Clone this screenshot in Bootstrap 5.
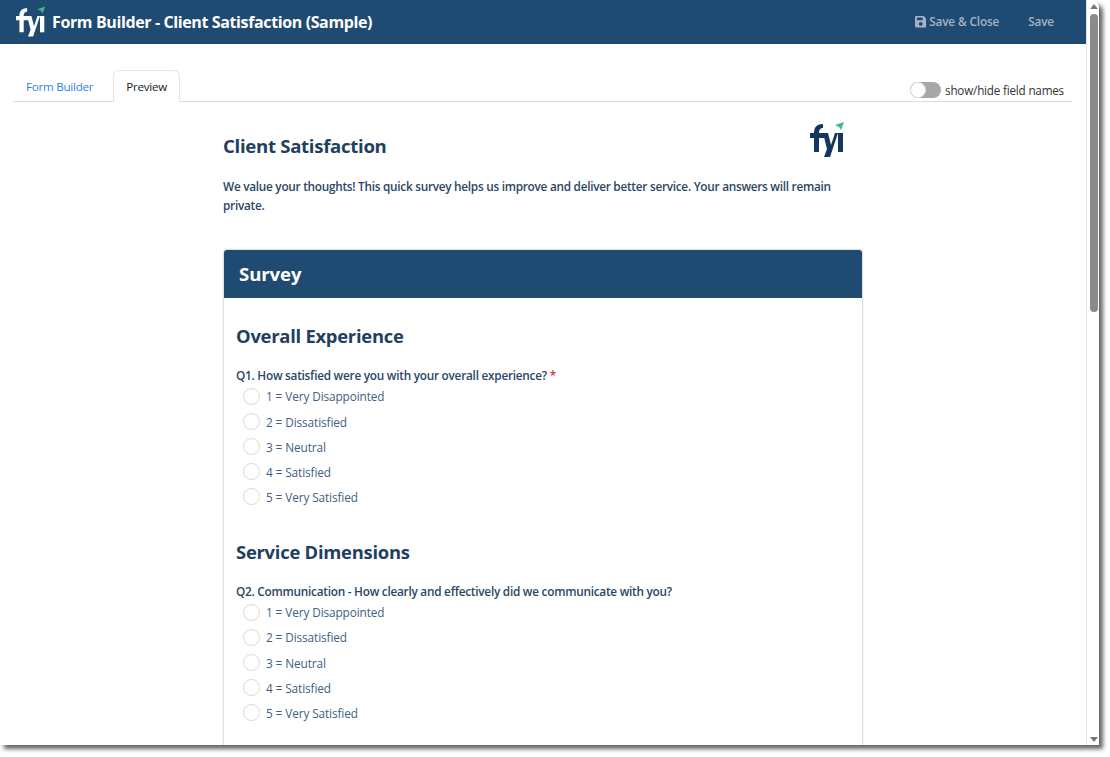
<!DOCTYPE html>
<html lang="en">
<head>
<meta charset="utf-8">
<title>Form Builder</title>
<link href="https://cdn.jsdelivr.net/npm/bootstrap@5.3.0/dist/css/bootstrap.min.css" rel="stylesheet">
<style>
html,body{height:100%;overflow:hidden;background:#fff}
body{font-family:"Open Sans","Noto Sans",sans-serif;color:#1f3f5f;font-size:13px}
.app-window{width:1099px;height:745px;box-shadow:4px 4px 4px #666;border-top-right-radius:8px;overflow:hidden;background:#fff}
.app-main{width:1086px;min-width:1086px;overflow:hidden}
.top-bar{height:44px;background:#1f4a72;color:#fff;padding:0 32px 0 16px}
.bar-title{font-size:16px;font-weight:700;margin:2px 0 0 6px;letter-spacing:-.38px}
.bar-action{font-size:11.8px;font-weight:600;color:#a5b4c4;background:none;border:0;padding:0;letter-spacing:-.15px}
.bar-gap{gap:29px}
.action-inner{gap:3px}
.tab-strip{margin:26px 14px 0 13px;height:32px;border-bottom-color:#dcdcdc}
.tab-strip .nav-link{font-size:11.6px;letter-spacing:-.25px;padding:0 12px;height:32px;line-height:31px;color:#2f80f0}
.tab-strip .nav-link.active{color:#222;border-color:#e6e6e6 #e6e6e6 #fff;padding:0 12px}
.tab-strip .nav-item+.nav-item{margin-left:7px}
.names-switch{margin-top:11px;margin-right:8px;font-size:11.7px;letter-spacing:-.2px;color:#333}
.toggle-track{width:31px;height:16px;border-radius:8px;background:#a8a8a8;position:relative;margin:0 4px 3px 0}
.toggle-knob{position:absolute;left:0;top:0;width:16px;height:16px;border-radius:50%;background:#fff;border:1px solid #e2e2e2}
.survey-wrap{width:640px;margin-left:223px}
.intro-head{height:68px;padding-top:20px;width:622px}
.intro-title{font-size:18.6px;font-weight:700;color:#1f3f5f;margin:0;padding-top:13px;letter-spacing:-.3px}
.intro-text{font-size:11.8px;font-weight:600;line-height:18.5px;color:#2a4766;width:625px;margin:7px 0 35px;letter-spacing:-.27px}
.survey-card{border-color:#dfdfdf;border-radius:4px 4px 0 0;box-shadow:0 0 3px rgba(0,0,0,.08)}
.survey-head{height:48px;background:#1f4a72;color:#fff;font-size:18.6px;font-weight:700;padding:0 15px;border-radius:3px 3px 0 0;letter-spacing:-.1px}
.survey-body{padding:25px 12px 0}
.section-name{font-size:18.4px;font-weight:700;color:#1f3f5f;margin:0 0 17.6px;line-height:26px;letter-spacing:-.25px}
.question{font-size:11.8px;font-weight:600;color:#2a4766;line-height:17px;margin-bottom:0;letter-spacing:-.25px}
.req{color:#d8301c}
.answer{height:25.2px;padding-left:7px;color:#3d5f82;font-size:11.8px;letter-spacing:-.1px}
.answer-dot{width:17px;height:17px;border:1px solid #d9d9d9;border-radius:50%;margin-right:6px;background:#fff}
.answer-text{position:relative;top:1px}
.q-block{margin-bottom:29.4px}
.scroll-rail{width:13px;background:#fff;border-left:1px solid #e4e4e4;padding:0 2px 0 3px}
.scroll-thumb{width:8px;height:298px;background:#8b8b8b;border-radius:4px}
.arrow-up{width:0;height:0;border-left:4px solid transparent;border-right:4px solid transparent;border-bottom:5px solid #777;margin:4px 0 5px 0}
.arrow-down{width:0;height:0;border-left:4px solid transparent;border-right:4px solid transparent;border-top:5px solid #777;margin:0 0 3px 0}
</style>
</head>
<body>
<div class="app-window d-flex">
  <div class="app-main">
    <header class="top-bar d-flex align-items-center">
      <svg width="30" height="32" viewBox="0 0 35 36" aria-hidden="true">
        <path fill="#fff" d="M4 30V16H0v-5h4C4 5 7 2 13 2v4c-2 0-4 1-4 5h5v5H9v14z"/>
        <path fill="#fff" d="M13 11h5l3 12 4-12h3l-8 24h-6l3-8z"/>
        <path fill="#fff" d="M28 11h5v19h-5z"/>
        <path fill="#3fb985" d="M25 3l9-3-3 8-2-3z"/>
      </svg>
      <h1 class="bar-title">Form Builder - Client Satisfaction (Sample)</h1>
      <div class="ms-auto d-flex align-items-center bar-gap">
        <button class="bar-action d-flex align-items-center action-inner" type="button">
          <svg width="11.500" height="11.500" viewBox="0 0 12 12" aria-hidden="true"><path fill="#a5b4c4" fill-rule="evenodd" d="M1.2 0H9l3 3v7.800A1.200 1.200 0 0 1 10.800 12H1.200A1.200 1.200 0 0 1 0 10.800V1.200A1.200 1.200 0 0 1 1.200 0zM2 1.500V4.500h6V1.500zM6 6.300a2 2 0 1 0 0 4 2 2 0 0 0 0-4z"/></svg>
          Save &amp; Close
        </button>
        <button class="bar-action" type="button">Save</button>
      </div>
    </header>

    <div class="d-flex justify-content-between nav nav-tabs tab-strip">
      <ul class="nav">
        <li class="nav-item"><a class="nav-link" href="#">Form Builder</a></li>
        <li class="nav-item"><a class="nav-link active" href="#">Preview</a></li>
      </ul>
      <div class="names-switch d-flex align-items-center">
        <span class="toggle-track"><span class="toggle-knob"></span></span>
        show/hide field names
      </div>
    </div>

    <main class="survey-wrap">
      <div class="intro-head d-flex justify-content-between align-items-start">
        <h2 class="intro-title">Client Satisfaction</h2>
        <svg width="35" height="36" viewBox="0 0 35 36" aria-hidden="true">
          <path fill="#15365f" d="M4 30V16H0v-5h4C4 5 7 2 13 2v4c-2 0-4 1-4 5h5v5H9v14z"/>
          <path fill="#15365f" d="M13 11h5l3 12 4-12h3l-8 24h-6l3-8z"/>
          <path fill="#15365f" d="M28 11h5v19h-5z"/>
          <path fill="#3fb985" d="M25 3l9-3-3 8-2-3z"/>
        </svg>
      </div>
      <p class="intro-text">We value your thoughts! This quick survey helps us improve and deliver better service. Your answers will remain private.</p>

      <section class="card survey-card">
        <div class="survey-head d-flex align-items-center">Survey</div>
        <div class="survey-body">
          <div class="q-block">
            <h3 class="section-name">Overall Experience</h3>
            <div class="question">Q1. How satisfied were you with your overall experience? <span class="req">*</span></div>
            <div class="answer d-flex align-items-center"><span class="answer-dot"></span><span class="answer-text">1 = Very Disappointed</span></div>
            <div class="answer d-flex align-items-center"><span class="answer-dot"></span><span class="answer-text">2 = Dissatisfied</span></div>
            <div class="answer d-flex align-items-center"><span class="answer-dot"></span><span class="answer-text">3 = Neutral</span></div>
            <div class="answer d-flex align-items-center"><span class="answer-dot"></span><span class="answer-text">4 = Satisfied</span></div>
            <div class="answer d-flex align-items-center"><span class="answer-dot"></span><span class="answer-text">5 = Very Satisfied</span></div>
          </div>
          <div class="q-block">
            <h3 class="section-name">Service Dimensions</h3>
            <div class="question">Q2. Communication - How clearly and effectively did we communicate with you?</div>
            <div class="answer d-flex align-items-center"><span class="answer-dot"></span><span class="answer-text">1 = Very Disappointed</span></div>
            <div class="answer d-flex align-items-center"><span class="answer-dot"></span><span class="answer-text">2 = Dissatisfied</span></div>
            <div class="answer d-flex align-items-center"><span class="answer-dot"></span><span class="answer-text">3 = Neutral</span></div>
            <div class="answer d-flex align-items-center"><span class="answer-dot"></span><span class="answer-text">4 = Satisfied</span></div>
            <div class="answer d-flex align-items-center"><span class="answer-dot"></span><span class="answer-text">5 = Very Satisfied</span></div>
          </div>
        </div>
      </section>
    </main>
  </div>
  <div class="scroll-rail d-flex flex-column">
    <div class="arrow-up"></div>
    <div class="scroll-thumb"></div>
    <div class="arrow-down mt-auto"></div>
  </div>
</div>
<script src="https://cdn.jsdelivr.net/npm/bootstrap@5.3.0/dist/js/bootstrap.bundle.min.js"></script>
</body>
</html>
